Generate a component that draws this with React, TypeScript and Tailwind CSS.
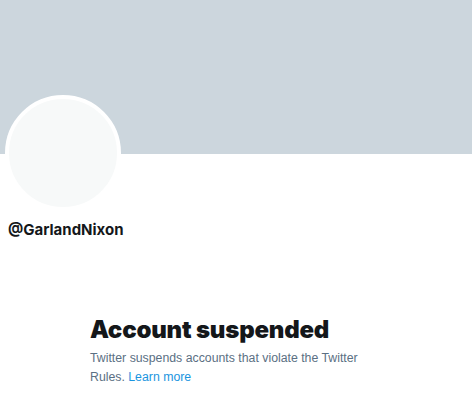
export default function App() {
  return (
    <div
      className="w-[472px] h-[410px] bg-white overflow-hidden"
      style={{ fontFamily: 'Inter, "Liberation Sans", sans-serif' }}
    >
      <div className="h-[154px] bg-[#ccd6dd]" />
      <div className="px-[5px] -mt-[59px]">
        <div className="w-[116px] h-[116px] rounded-full border-4 border-white bg-[#f7f9f9]" />
        <div className="mt-[9px] pl-[3px] text-[15px] leading-[20px] font-bold text-[#14171a]">
          @GarlandNixon
        </div>
      </div>
      <div className="pl-[90px] pt-[76px] w-[370px]">
        <h1 className="text-[24px] leading-[28px] font-black text-[#14171a] tracking-[-0.2px]">
          Account suspended
        </h1>
        <p className="mt-[5px] text-[12.3px] leading-[19px] text-[#5b7083] font-['Liberation_Sans',sans-serif]">
          Twitter suspends accounts that violate the Twitter Rules.{' '}
          <a className="text-[#1b95e0]">Learn more</a>
        </p>
      </div>
    </div>
  )
}
